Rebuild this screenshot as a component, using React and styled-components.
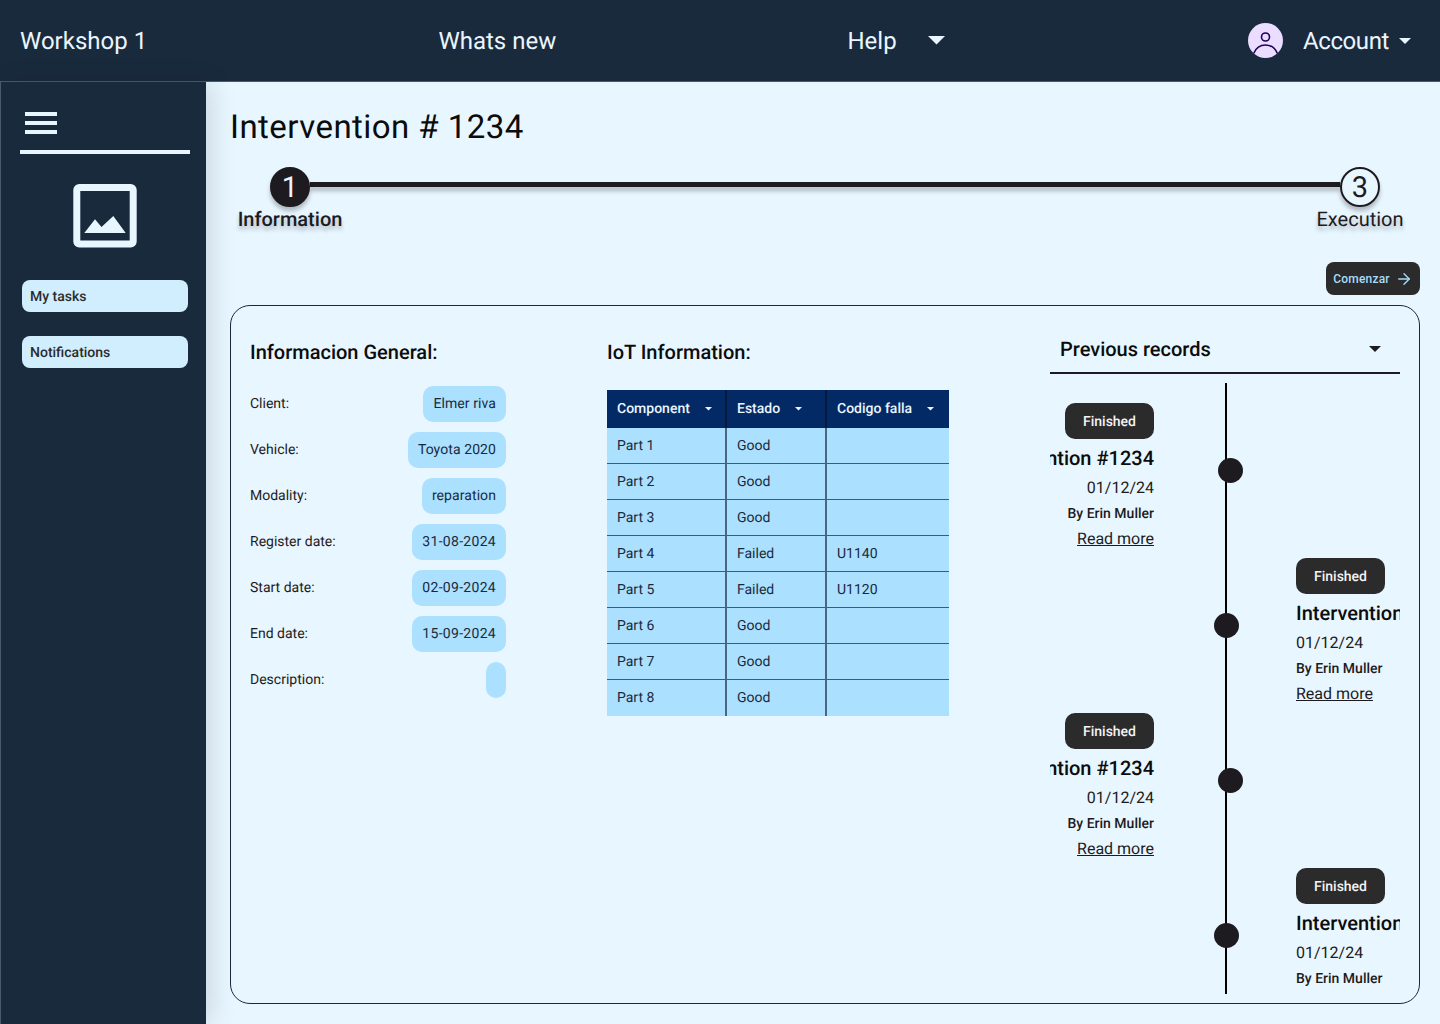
import React from 'react';
import styled, { createGlobalStyle } from 'styled-components';
import { ArrowRight } from 'lucide-react';

const navy = '#1a2a3d';
const ink = '#1d1b20';
const paper = '#e8f6ff';
const chip = '#abe0ff';

const GlobalStyle = createGlobalStyle`
  html, body {
    margin: 0;
    height: 100%;
    background: ${paper};
    font-family: 'Roboto', 'Liberation Sans', sans-serif;
    text-rendering: geometricPrecision;
  }
  * {
    box-sizing: border-box;
  }
`;

const generalInfo = [
  ['Client:', 'Elmer riva'],
  ['Vehicle:', 'Toyota 2020'],
  ['Modality:', 'reparation'],
  ['Register date:', '31-08-2024'],
  ['Start date:', '02-09-2024'],
  ['End date:', '15-09-2024'],
  ['Description:', ''],
];

const parts = [
  ['Part 1', 'Good', ''],
  ['Part 2', 'Good', ''],
  ['Part 3', 'Good', ''],
  ['Part 4', 'Failed', 'U1140'],
  ['Part 5', 'Failed', 'U1120'],
  ['Part 6', 'Good', ''],
  ['Part 7', 'Good', ''],
  ['Part 8', 'Good', ''],
];

const records = ['left', 'right', 'left', 'right'];

const Caret = ({ width = 12, color = 'currentColor' }) => (
  <svg width={width} height={width / 2} viewBox="0 0 12 6" style={{ flexShrink: 0 }}>
    <path d="M0 0h12L6 6z" fill={color} />
  </svg>
);

const AvatarIcon = () => (
  <svg width="35" height="35" viewBox="0 0 35 35">
    <circle cx="17.5" cy="17.5" r="17.5" fill="#eaddff" />
    <circle cx="17.5" cy="14" r="4" fill="none" stroke="#21005d" strokeWidth="1.6" />
    <path d="M5.800 30.300c2-5 6.500-8.300 11.700-8.300s9.700 3.300 11.700 8.300" fill="none" stroke="#21005d" strokeWidth="1.6" />
  </svg>
);

const ImageIcon = () => (
  <svg width="64" height="64" viewBox="0 0 64 64">
    <rect x="3.800" y="3.500" width="56.400" height="56.500" rx="2.500" fill="none" stroke={paper} strokeWidth="7" />
    <path d="M11.300 49L22 35.300l6.500 7.700L40.300 32l12.400 17z" fill={paper} />
  </svg>
);

const App = () => (
  <Page>
    <GlobalStyle />
    <Header>
      <NavText>Workshop 1</NavText>
      <NavText>Whats new</NavText>
      <HelpGroup>
        <NavText>Help</NavText>
        <CaretBox>
          <Caret width={17} />
        </CaretBox>
      </HelpGroup>
      <AccountGroup>
        <AvatarIcon />
        <AccountName>Account</AccountName>
        <Caret width={12} />
      </AccountGroup>
    </Header>
    <Body>
      <Sidebar>
        <Hamburger>
          <span />
          <span />
          <span />
        </Hamburger>
        <SideDivider />
        <LogoSlot>
          <ImageIcon />
        </LogoSlot>
        <SideButton>My tasks</SideButton>
        <SideButton>Notifications</SideButton>
      </Sidebar>
      <Main>
        <Title>Intervention # 1234</Title>
        <StepTrack>
          <StepCircle $active>1</StepCircle>
          <StepLine />
          <StepCircle>3</StepCircle>
        </StepTrack>
        <StepLabels>
          <StepLabel $active>Information</StepLabel>
          <StepLabel>Execution</StepLabel>
        </StepLabels>
        <Actions>
          <StartButton>
            Comenzar
            <ArrowRight size={18} strokeWidth={1.8} />
          </StartButton>
        </Actions>
        <Card>
          <GeneralColumn>
            <Heading>Informacion General:</Heading>
            <InfoList>
              {generalInfo.map(([label, value]) => (
                <InfoRow key={label}>
                  <span>{label}</span>
                  <Chip $date={/^\d/.test(value)}>{value}</Chip>
                </InfoRow>
              ))}
            </InfoList>
          </GeneralColumn>
          <IotColumn>
            <Heading>IoT Information:</Heading>
            <PartsTable>
              <colgroup>
                <col width="120" />
                <col width="100" />
                <col width="122" />
              </colgroup>
              <thead>
                <tr>
                  {['Component', 'Estado', 'Codigo falla'].map((name) => (
                    <th key={name}>
                      <HeadCell>
                        {name}
                        <Caret width={7} />
                      </HeadCell>
                    </th>
                  ))}
                </tr>
              </thead>
              <tbody>
                {parts.map(([part, state, code]) => (
                  <tr key={part}>
                    <td>{part}</td>
                    <td>{state}</td>
                    <td>{code}</td>
                  </tr>
                ))}
              </tbody>
            </PartsTable>
          </IotColumn>
          <RecordsColumn>
            <RecordsSelect>
              Previous records
              <Caret width={12} color={ink} />
            </RecordsSelect>
            <Timeline>
              <TimelineLine />
              {records.map((side, i) => (
                <RecordItem key={i} $side={side}>
                  <RecordDot $side={side} />
                  <RecordBody $side={side}>
                    <Badge>Finished</Badge>
                    <RecordTitle>Intervention #1234</RecordTitle>
                    <RecordDate>01/12/24</RecordDate>
                    <RecordAuthor>By Erin Muller</RecordAuthor>
                    <ReadMore href="#">Read more</ReadMore>
                  </RecordBody>
                </RecordItem>
              ))}
            </Timeline>
          </RecordsColumn>
        </Card>
      </Main>
    </Body>
  </Page>
);

export default App;

const Page = styled.div`
  width: 1440px;
  height: 1024px;
  display: flex;
  flex-direction: column;
  overflow: hidden;
`;

const Header = styled.header`
  height: 82px;
  flex-shrink: 0;
  display: flex;
  align-items: center;
  justify-content: space-between;
  padding: 0 29px 0 20px;
  background: ${navy};
  border-bottom: 1px solid #4a5a6b;
  color: #eaf6ff;
`;

const NavText = styled.span`
  font-size: 24px;
  line-height: 32px;
  color: #eaf6ff;
`;

const AccountName = styled(NavText)`
  letter-spacing: -0.4px;
`;

const HelpGroup = styled.div`
  display: flex;
  align-items: center;
  gap: 20px;
`;

const CaretBox = styled.div`
  width: 40px;
  height: 40px;
  display: flex;
  align-items: center;
  padding-left: 11px;
`;

const AccountGroup = styled.div`
  display: flex;
  align-items: center;
  gap: 20px;

  svg:last-child {
    margin-left: -10px;
  }
`;

const Body = styled.div`
  flex: 1;
  display: flex;
  min-height: 0;
`;

const Sidebar = styled.aside`
  width: 206px;
  flex-shrink: 0;
  position: relative;
  z-index: 1;
  display: flex;
  flex-direction: column;
  padding: 30px 16px 0 19px;
  background: ${navy};
  border-left: 1px solid #4a5a6b;
  box-shadow: 6px 0 24px rgba(0, 0, 0, 0.12);
`;

const Hamburger = styled.div`
  display: flex;
  flex-direction: column;
  gap: 5px;
  margin-left: 5px;

  span {
    width: 32px;
    height: 4px;
    background: ${paper};
  }
`;

const SideDivider = styled.div`
  width: 170px;
  height: 4px;
  margin-top: 16px;
  background: ${paper};
`;

const LogoSlot = styled.div`
  display: flex;
  justify-content: center;
  width: 170px;
  margin: 30px 0 32px;
`;

const SideButton = styled.div`
  width: 166px;
  height: 32px;
  margin: 0 0 24px 2px;
  padding: 1px 0 0 8px;
  display: flex;
  align-items: center;
  border-radius: 8px;
  background: #d1eeff;
  color: #2b2b2b;
  font-size: 14px;
  font-weight: 500;
`;

const Main = styled.main`
  flex: 1;
  display: flex;
  flex-direction: column;
  padding: 24px 20px 20px 24px;
  background: ${paper};
  min-width: 0;
`;

const Title = styled.h1`
  margin: 0;
  font-size: 33px;
  line-height: 44px;
  letter-spacing: 0.45px;
  font-weight: 400;
  color: #0c0c0c;
`;

const StepTrack = styled.div`
  display: flex;
  align-items: flex-start;
  padding: 0 40px;
  margin-top: 17px;
`;

const StepCircle = styled.div`
  width: 40px;
  height: 40px;
  flex-shrink: 0;
  display: flex;
  align-items: center;
  justify-content: center;
  padding-top: 1px;
  border-radius: 50%;
  position: relative;
  font-size: 29px;
  background: ${(p) => (p.$active ? ink : 'transparent')};
  color: ${(p) => (p.$active ? paper : ink)};
  border: 2px solid ${ink};
  box-shadow: 0 4px 4px rgba(0, 0, 0, 0.25);
`;

const StepLine = styled.div`
  flex: 1;
  height: 5px;
  margin-top: 15px;
  background: ${ink};
  box-shadow: 0 4px 4px rgba(0, 0, 0, 0.25);
`;

const StepLabels = styled.div`
  display: flex;
  justify-content: space-between;
`;

const StepLabel = styled.div`
  width: 120px;
  text-align: center;
  font-size: 20px;
  line-height: 24px;
  font-weight: ${(p) => (p.$active ? 500 : 400)};
  color: ${ink};
  text-shadow: 0 4px 4px rgba(0, 0, 0, 0.25);
`;

const Actions = styled.div`
  display: flex;
  justify-content: flex-end;
  margin-top: 31px;
`;

const StartButton = styled.button`
  width: 94px;
  height: 33px;
  display: flex;
  align-items: center;
  justify-content: center;
  gap: 5px;
  padding: 0;
  border: none;
  border-radius: 8px;
  background: #2b2b2b;
  color: #a8dcf8;
  font-family: inherit;
  font-size: 12px;
  font-weight: 500;
  letter-spacing: 0.2px;
`;

const Card = styled.section`
  height: 699px;
  margin-top: 10px;
  display: flex;
  padding: 20px 19px 9px 19px;
  border: 1px solid ${navy};
  border-radius: 20px;
  background: ${paper};
`;

const GeneralColumn = styled.div`
  width: 256px;
  padding-top: 14px;
`;

const Heading = styled.h2`
  margin: 0;
  font-size: 20px;
  line-height: 24px;
  font-weight: 500;
  color: #0c0c0c;
`;

const InfoList = styled.div`
  display: flex;
  flex-direction: column;
  gap: 10px;
  margin-top: 22px;
`;

const InfoRow = styled.div`
  height: 36px;
  display: flex;
  align-items: center;
  justify-content: space-between;
  font-size: 14px;
  color: ${ink};
`;

const Chip = styled.div`
  height: 36px;
  min-width: 20px;
  display: flex;
  align-items: center;
  padding: 0 10px;
  border-radius: 10px;
  background: ${chip};
  color: ${navy};
  font-size: 14px;
  letter-spacing: ${(p) => (p.$date ? '0.3px' : '0.08px')};
`;

const IotColumn = styled.div`
  width: 343px;
  margin-left: 101px;
  padding-top: 14px;
`;

const PartsTable = styled.table`
  width: 342px;
  margin-top: 26px;
  table-layout: fixed;
  border-collapse: separate;
  border-spacing: 0;
  font-size: 14px;

  th {
    height: 38px;
    padding: 0 0 0 10px;
    background: #042a66;
    color: #eaf6ff;
    font-weight: 500;
    text-align: left;
    border-right: 2px solid #03193f;
  }

  td {
    height: 36px;
    padding: 0 0 0 10px;
    background: ${chip};
    color: ${navy};
    border-right: 2px solid #4a6680;
    border-bottom: 1px solid #3f5c76;
  }

  th:last-child,
  td:last-child {
    border-right: none;
  }

  tr:last-child td {
    border-bottom: none;
  }
`;

const HeadCell = styled.div`
  display: flex;
  align-items: center;
  gap: 15px;
`;

const RecordsColumn = styled.div`
  width: 350px;
  margin-left: auto;
  display: flex;
  flex-direction: column;
`;

const RecordsSelect = styled.div`
  height: 48px;
  flex-shrink: 0;
  display: flex;
  align-items: center;
  justify-content: space-between;
  padding: 0 19px 0 10px;
  border-bottom: 2px solid ${ink};
  font-size: 20px;
  font-weight: 500;
  color: #0c0c0c;
`;

const Timeline = styled.div`
  position: relative;
  height: 611px;
  margin-top: 9px;
  overflow: hidden;
`;

const TimelineLine = styled.div`
  position: absolute;
  left: 175px;
  top: 0;
  bottom: 0;
  width: 2px;
  background: #000;
`;

const RecordItem = styled.div`
  position: relative;
  height: 155px;
  padding-top: 20px;
  padding-left: ${(p) => (p.$side === 'left' ? '0' : '246px')};
`;

const RecordDot = styled.div`
  position: absolute;
  top: 75px;
  left: ${(p) => (p.$side === 'left' ? '168px' : '164px')};
  width: 25px;
  height: 25px;
  border-radius: 50%;
  background: ${ink};
`;

const RecordBody = styled.div`
  width: 104px;
  display: flex;
  flex-direction: column;
  white-space: nowrap;
  align-items: ${(p) => (p.$side === 'left' ? 'flex-end' : 'flex-start')};
`;

const Badge = styled.div`
  width: 89px;
  height: 36px;
  flex-shrink: 0;
  display: flex;
  align-items: center;
  justify-content: center;
  padding-top: 1px;
  border-radius: 10px;
  background: #2b2b2b;
  color: #f4f4f4;
  font-size: 14px;
  font-weight: 500;
`;

const RecordTitle = styled.div`
  margin-top: 7px;
  font-size: 20px;
  line-height: 24px;
  font-weight: 500;
  color: #0c0c0c;
`;

const RecordDate = styled.div`
  margin-top: 6px;
  font-size: 16px;
  line-height: 24px;
  color: ${ink};
`;

const RecordAuthor = styled.div`
  margin-top: 4px;
  font-size: 14px;
  line-height: 20px;
  font-weight: 500;
  color: ${ink};
`;

const ReadMore = styled.a`
  margin-top: 3px;
  font-size: 16px;
  line-height: 24px;
  color: ${ink};
  text-decoration: underline;
`;
